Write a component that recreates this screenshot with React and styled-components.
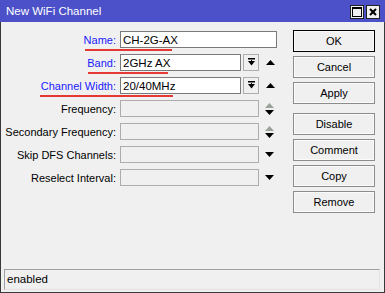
import React from 'react';
import styled, { createGlobalStyle } from 'styled-components';

const Global = createGlobalStyle`
  html, body { margin: 0; padding: 0; background: #f0f0f0; }
  body { font-family: "Liberation Sans", Arial, sans-serif; font-size: 11px; }
`;

const Window = styled.div`
  width: 385px;
  height: 293px;
  box-sizing: border-box;
  border: 1px solid #3a3a3a;
  border-top: none;
  background: #f0f0f0;
  display: flex;
  flex-direction: column;
`;

const TitleBar = styled.div`
  height: 22px;
  background: #4c50c9;
  display: flex;
  align-items: center;
  justify-content: space-between;
  padding: 0 5px 0 6px;
  color: #fff;
  font-size: 11.5px;
  margin: 0 -1px;
`;

const TitleButtons = styled.div`
  display: flex;
  gap: 2px;
  margin-top: 1px;
`;

const TitleBtn = styled.div`
  width: 14px;
  height: 14px;
  box-sizing: border-box;
  background: #f0f0f0;
  border: 1px solid #222;
  display: flex;
  align-items: center;
  justify-content: center;
`;

const Body = styled.div`
  flex: 1;
  display: flex;
  padding: 8px 9px 0 0;
`;

const Form = styled.div`
  flex: 1;
  display: flex;
  flex-direction: column;
  gap: 6px;
  padding-top: 1px;
`;

const Row = styled.div`
  position: relative;
  display: flex;
  align-items: center;
  height: 17px;
`;

const Label = styled.div`
  width: 119px;
  text-align: right;
  padding-right: 4px;
  box-sizing: border-box;
  color: ${p => (p.$link ? '#1a1aff' : '#000')};
  white-space: nowrap;
`;

const Input = styled.div`
  width: ${p => p.$w}px;
  height: 17px;
  box-sizing: border-box;
  border: 1px solid ${p => (p.$disabled ? '#adadad' : '#7a7a7a')};
  background: ${p => (p.$disabled ? '#f0f0f0' : '#fff')};
  padding: 1px 2px 0;
  line-height: 14px;
  font-size: 11.5px;
  color: #000;
`;

const DropBtn = styled.div`
  width: 16px;
  height: 17px;
  box-sizing: border-box;
  margin-left: 2px;
  border: 1px solid #adadad;
  background: #f0f0f0;
  display: flex;
  align-items: center;
  justify-content: center;
`;

const ArrowBox = styled.div`
  width: 9px;
  margin-left: ${p => p.$ml}px;
  display: flex;
  align-items: center;
  justify-content: center;
`;

const Annot = styled.div`
  position: absolute;
  left: ${p => p.$l}px;
  width: ${p => p.$w}px;
  top: 18px;
  height: 2px;
  background: #e53935;
`;

const Buttons = styled.div`
  width: 82px;
  display: flex;
  flex-direction: column;
  gap: 4px;
`;

const Button = styled.div`
  height: 22px;
  box-sizing: border-box;
  border: 1px solid ${p => (p.$def ? '#000' : '#8c8c8c')};
  box-shadow: inset 0 0 0 1px #fbfbfb;
  background: #f0f0f0;
  display: flex;
  align-items: center;
  justify-content: center;
  font-size: 11px;
  margin-top: ${p => p.$mt || 0}px;
`;

const Status = styled.div`
  height: 21px;
  margin: 0 4px 2px 3px;
  box-sizing: border-box;
  border: 1px solid #a0a0a0;
  border-right-color: #e3e3e3;
  border-bottom-color: #e3e3e3;
  padding: 3px 2px;
  font-size: 11.5px;
`;

const DownBar = () => (
  <svg width="9" height="9" viewBox="0 0 9 9">
    <rect x="1" y="0" width="7" height="1.5" fill="#000" />
    <polygon points="1,3 8,3 4.5,7.5" fill="#000" />
    <rect x="4" y="2" width="1" height="2" fill="#000" />
  </svg>
);

const Up = () => (
  <svg width="9" height="6" viewBox="0 0 9 6"><polygon points="4.5,0 9,5 0,5" fill="#000" /></svg>
);

const Down = () => (
  <svg width="9" height="6" viewBox="0 0 9 6"><polygon points="0,0 9,0 4.5,5" fill="#000" /></svg>
);

const UpDown = () => (
  <svg width="9" height="12" viewBox="0 0 9 12">
    <polygon points="4.5,0 9,5 0,5" fill="#9aa39a" />
    <polygon points="0,7 9,7 4.5,12" fill="#000" />
  </svg>
);

const rows = [
  { label: 'Name', link: true, value: 'CH-2G-AX', kind: 'text', annot: [84, 87] },
  { label: 'Band', link: true, value: '2GHz AX', kind: 'select', annot: [87, 80] },
  { label: 'Channel Width', link: true, value: '20/40MHz', kind: 'select', annot: [39, 133] },
  { label: 'Frequency', kind: 'updown' },
  { label: 'Secondary Frequency', kind: 'updown' },
  { label: 'Skip DFS Channels', kind: 'down' },
  { label: 'Reselect Interval', kind: 'down' },
];

const buttons = ['OK', 'Cancel', 'Apply', 'Disable', 'Comment', 'Copy', 'Remove'];

export default function App() {
  return (
    <>
      <Global />
      <Window>
        <TitleBar>
          <span>New WiFi Channel</span>
          <TitleButtons>
            <TitleBtn>
              <svg width="10" height="10" viewBox="0 0 10 10">
                <rect x="0.5" y="0.5" width="9" height="9" fill="none" stroke="#000" />
                <rect x="0" y="0" width="10" height="2" fill="#000" />
              </svg>
            </TitleBtn>
            <TitleBtn>
              <svg width="8" height="8" viewBox="0 0 8 8">
                <path d="M1 1 L7 7 M7 1 L1 7" stroke="#000" strokeWidth="2" />
              </svg>
            </TitleBtn>
          </TitleButtons>
        </TitleBar>
        <Body>
          <Form>
            {rows.map(r => (
              <Row key={r.label}>
                <Label $link={r.link}>{r.label}:</Label>
                {r.kind === 'text' && <Input $w={157}>{r.value}</Input>}
                {r.kind === 'select' && (
                  <>
                    <Input $w={121}>{r.value}</Input>
                    <DropBtn><DownBar /></DropBtn>
                    <ArrowBox $ml={7}><Up /></ArrowBox>
                  </>
                )}
                {r.kind === 'updown' && (
                  <>
                    <Input $w={139} $disabled />
                    <ArrowBox $ml={6}><UpDown /></ArrowBox>
                  </>
                )}
                {r.kind === 'down' && (
                  <>
                    <Input $w={139} $disabled />
                    <ArrowBox $ml={6}><Down /></ArrowBox>
                  </>
                )}
                {r.annot && <Annot $l={r.annot[0]} $w={r.annot[1]} />}
              </Row>
            ))}
          </Form>
          <Buttons>
            {buttons.map((b, i) => (
              <Button key={b} $def={i === 0} $mt={b === 'Disable' ? 5 : 0}>{b}</Button>
            ))}
          </Buttons>
        </Body>
        <Status>enabled</Status>
      </Window>
    </>
  );
}
